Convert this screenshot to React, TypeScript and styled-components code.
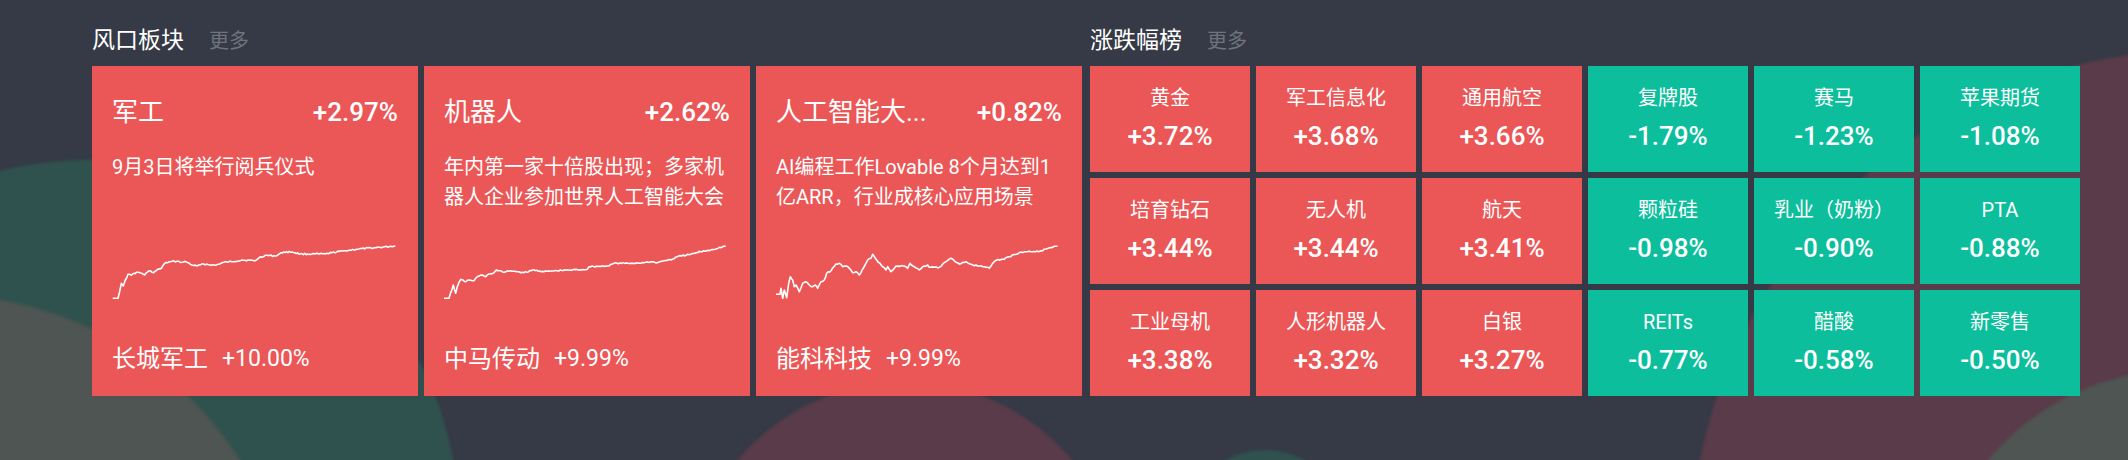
import React from 'react';
import styled, { createGlobalStyle } from 'styled-components';

const GlobalStyle = createGlobalStyle`
    html, body {
        margin: 0;
        padding: 0;
        background: #353a46;
    }
    body {
        font-family: Roboto, "Noto Sans CJK SC", sans-serif;
        color: #ffffff;
    }
`;

const RED = '#eb5656';
const GREEN = '#0cbe9c';

const Page = styled.div`
    position: relative;
    height: 460px;
    overflow: hidden;
    background: #353a46;
    padding: 24px 48px 0 92px;
    box-sizing: border-box;
`;

const Blob = styled.div<{ $x: number; $y: number; $r: number; $color: string }>`
    position: absolute;
    left: ${p => p.$x - p.$r}px;
    top: ${p => p.$y - p.$r}px;
    width: ${p => p.$r * 2}px;
    height: ${p => p.$r * 2}px;
    border-radius: 50%;
    background: ${p => p.$color};
    filter: blur(1.5px);
    z-index: 0;
`;

const Columns = styled.div`
    position: relative;
    z-index: 1;
    display: grid;
    grid-template-columns: 990px 990px;
    column-gap: 8px;
`;

const Section = styled.section`
    display: flex;
    flex-direction: column;
    min-width: 0;
`;

const Header = styled.div`
    display: flex;
    align-items: baseline;
    height: 34px;
    line-height: 34px;
    margin-bottom: 8px;
`;

const HeaderTitle = styled.span`
    font-size: 23px;
    color: #ffffff;
`;

const More = styled.span`
    font-size: 20px;
    color: #6f737c;
    margin-left: 25px;
    cursor: pointer;
`;

const CardRow = styled.div`
    display: grid;
    grid-template-columns: repeat(3, minmax(0, 1fr));
    gap: 6px;
    height: 330px;
`;

const Card = styled.div`
    background: ${RED};
    display: flex;
    flex-direction: column;
    padding: 28px 20px 21px;
    box-sizing: border-box;
    min-width: 0;
`;

const CardHead = styled.div`
    display: flex;
    justify-content: space-between;
    align-items: center;
    height: 36px;
    font-size: 26px;
    line-height: 36px;
    white-space: nowrap;
`;

const CardPct = styled.span`
    font-weight: 500;
`;

const Desc = styled.div`
    margin-top: 22px;
    height: 60px;
    font-size: 20px;
    line-height: 30px;
    overflow: hidden;
`;

const Chart = styled.svg`
    display: block;
    margin-top: 28px;
    width: 290px;
    height: 62px;
`;

const Leader = styled.div`
    margin-top: auto;
    display: flex;
    align-items: center;
    font-size: 24px;
    line-height: 32px;
`;

const LeaderPct = styled.span`
    margin-left: 14px;
    font-size: 23px;
`;

const Grid = styled.div`
    display: grid;
    grid-template-columns: repeat(6, minmax(0, 1fr));
    grid-template-rows: repeat(3, minmax(0, 1fr));
    gap: 6px;
    height: 330px;
`;

const Tile = styled.div<{ $up: boolean }>`
    background: ${p => (p.$up ? RED : GREEN)};
    display: flex;
    flex-direction: column;
    align-items: center;
    justify-content: center;
    gap: 8px;
`;

const TileName = styled.div`
    font-size: 20px;
    line-height: 26px;
    white-space: nowrap;
`;

const TilePct = styled.div`
    font-size: 26px;
    line-height: 34px;
    font-weight: 500;
`;

type Pt = [number, number];

// key points read off the screenshot (3x zoom coords)
const chartKeys: Pt[][] = [
    [
        [62, 205], [78, 205], [88, 160], [94, 168], [100, 150], [108, 133], [118, 136],
        [125, 130], [138, 127], [150, 130], [158, 135], [165, 127], [175, 122], [185, 128],
        [195, 120], [208, 115], [218, 100], [235, 95], [255, 94], [270, 97], [282, 95],
        [300, 105], [315, 108], [335, 102], [370, 106], [395, 97], [420, 95], [450, 90],
        [490, 92], [500, 84], [520, 76], [550, 78], [575, 66], [600, 66], [625, 72],
        [660, 72], [700, 72], [720, 68], [760, 62], [800, 57], [850, 53], [910, 48],
    ],
    [
        [60, 205], [75, 205], [88, 165], [95, 190], [100, 170], [110, 148], [122, 155],
        [135, 150], [150, 152], [160, 140], [175, 135], [185, 140], [195, 132], [210, 128],
        [218, 120], [240, 127], [260, 122], [280, 125], [300, 128], [330, 120], [360, 125],
        [400, 122], [440, 120], [490, 118], [495, 110], [550, 108], [570, 100], [620, 100],
        [660, 98], [680, 95], [700, 98], [720, 92], [745, 88], [760, 80], [800, 73],
        [830, 65], [860, 60], [905, 48],
    ],
    [
        [58, 193], [72, 193], [75, 175], [80, 205], [85, 180], [92, 203], [98, 160],
        [103, 140], [110, 150], [115, 170], [120, 165], [130, 185], [140, 160], [148, 155],
        [160, 165], [170, 170], [178, 165], [185, 175], [195, 155], [205, 150], [212, 130],
        [225, 122], [240, 102], [250, 100], [260, 110], [270, 108], [280, 115], [290, 128],
        [300, 125], [310, 135], [322, 115], [335, 90], [345, 85], [350, 73], [362, 90],
        [380, 110], [390, 120], [395, 110], [405, 125], [420, 108], [445, 108], [455, 115],
        [462, 100], [475, 110], [490, 120], [500, 110], [515, 105], [520, 112], [550, 112],
        [570, 95], [585, 85], [610, 102], [630, 95], [650, 105], [670, 108], [690, 112],
        [700, 115], [718, 92], [740, 88], [760, 80], [790, 68], [810, 65], [830, 65],
        [860, 62], [870, 57], [905, 48],
    ],
];

const buildLine = (keys: Pt[], seed: number) => {
    let s = seed;
    const rand = () => {
        s = (s * 9301 + 49297) % 233280;
        return s / 233280 - 0.5;
    };
    const pts: string[] = [];
    for (let i = 0; i < keys.length - 1; i++) {
        const [x0, y0] = [keys[i][0] / 3 - 20, keys[i][1] / 3 - 10];
        const [x1, y1] = [keys[i + 1][0] / 3 - 20, keys[i + 1][1] / 3 - 10];
        const steps = Math.max(1, Math.round((x1 - x0) / 1.5));
        for (let k = 0; k < steps; k++) {
            const t = k / steps;
            const jitter = i < 1 || k === 0 ? 0 : rand() * 1.4;
            pts.push(`${(x0 + (x1 - x0) * t).toFixed(1)},${(y0 + (y1 - y0) * t + jitter).toFixed(1)}`);
        }
    }
    const last = keys[keys.length - 1];
    pts.push(`${last[0] / 3 - 20},${last[1] / 3 - 10}`);
    return pts.join(' ');
};

const hotSectors = [
    {
        name: '军工',
        pct: '+2.97%',
        desc: '9月3日将举行阅兵仪式',
        stock: '长城军工',
        stockPct: '+10.00%',
    },
    {
        name: '机器人',
        pct: '+2.62%',
        desc: '年内第一家十倍股出现；多家机器人企业参加世界人工智能大会',
        stock: '中马传动',
        stockPct: '+9.99%',
    },
    {
        name: '人工智能大...',
        pct: '+0.82%',
        desc: 'AI编程工作Lovable 8个月达到1亿ARR，行业成核心应用场景',
        stock: '能科科技',
        stockPct: '+9.99%',
    },
];

const movers = [
    ['黄金', '+3.72%'], ['军工信息化', '+3.68%'], ['通用航空', '+3.66%'],
    ['复牌股', '-1.79%'], ['赛马', '-1.23%'], ['苹果期货', '-1.08%'],
    ['培育钻石', '+3.44%'], ['无人机', '+3.44%'], ['航天', '+3.41%'],
    ['颗粒硅', '-0.98%'], ['乳业（奶粉）', '-0.90%'], ['PTA', '-0.88%'],
    ['工业母机', '+3.38%'], ['人形机器人', '+3.32%'], ['白银', '+3.27%'],
    ['REITs', '-0.77%'], ['醋酸', '-0.58%'], ['新零售', '-0.50%'],
];

const App = () => (
    <>
        <GlobalStyle />
        <Page>
            {/* soft background shapes */}
            <Blob $x={90} $y={530} $r={370} $color="#30524f" />
            <Blob $x={-60} $y={650} $r={355} $color="#4e5552" />
            <Blob $x={905} $y={600} $r={218} $color="#5a3b49" />
            <Blob $x={1265} $y={530} $r={80} $color="#30524f" />
            <Blob $x={2200} $y={560} $r={510} $color="#5a3b49" />
            <Blob $x={2180} $y={620} $r={250} $color="#4e5552" />

            <Columns>
                <Section>
                    <Header>
                        <HeaderTitle>风口板块</HeaderTitle>
                        <More>更多</More>
                    </Header>
                    <CardRow>
                        {hotSectors.map((c, i) => (
                            <Card key={c.name}>
                                <CardHead>
                                    <span>{c.name}</span>
                                    <CardPct>{c.pct}</CardPct>
                                </CardHead>
                                <Desc>{c.desc}</Desc>
                                <Chart viewBox="0 0 290 62">
                                    <polyline
                                        points={buildLine(chartKeys[i], 17 + i * 31)}
                                        fill="none"
                                        stroke="#ffffff"
                                        strokeWidth={1.6}
                                        strokeLinejoin="round"
                                    />
                                </Chart>
                                <Leader>
                                    <span>{c.stock}</span>
                                    <LeaderPct>{c.stockPct}</LeaderPct>
                                </Leader>
                            </Card>
                        ))}
                    </CardRow>
                </Section>

                <Section>
                    <Header>
                        <HeaderTitle>涨跌幅榜</HeaderTitle>
                        <More>更多</More>
                    </Header>
                    <Grid>
                        {movers.map(([name, pct]) => (
                            <Tile key={name} $up={pct.startsWith('+')}>
                                <TileName>{name}</TileName>
                                <TilePct>{pct}</TilePct>
                            </Tile>
                        ))}
                    </Grid>
                </Section>
            </Columns>
        </Page>
    </>
);

export default App;
